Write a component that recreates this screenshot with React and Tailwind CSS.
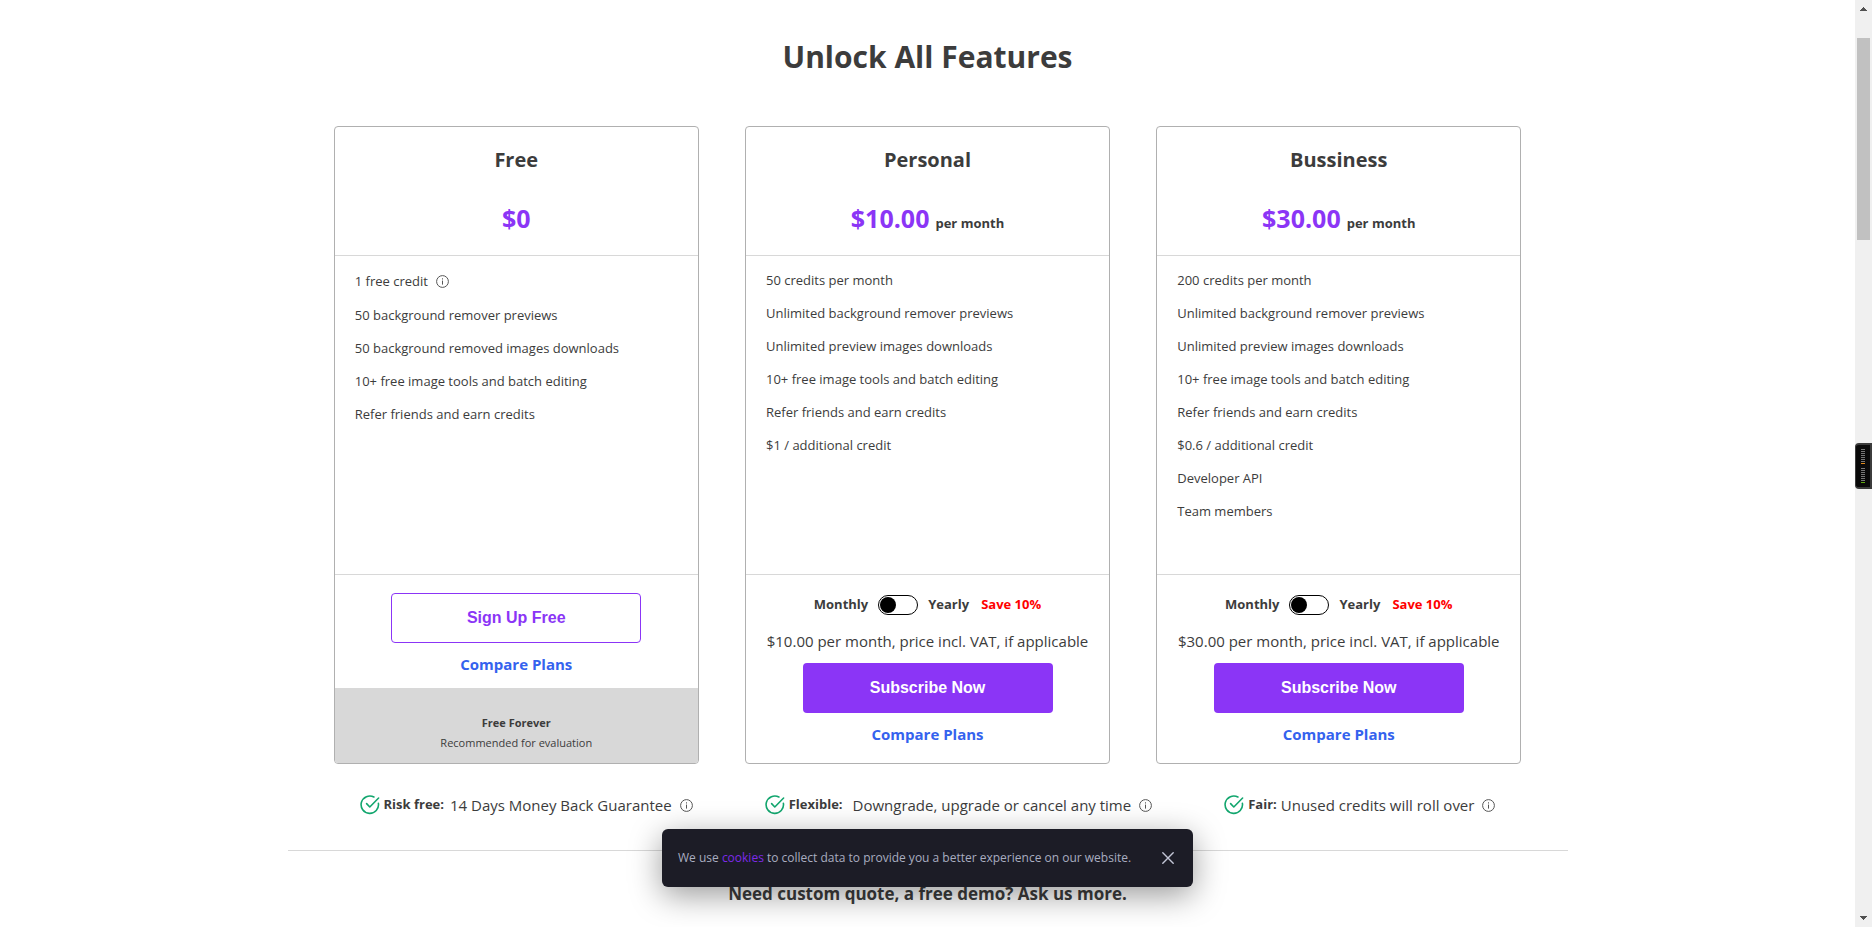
import { useState } from 'react'

const PLANS = [
  {
    name: 'Free',
    price: '$0',
    free: true,
    features: [
      '1 free credit',
      '50 background remover previews',
      '50 background removed images downloads',
      '10+ free image tools and batch editing',
      'Refer friends and earn credits',
    ],
  },
  {
    name: 'Personal',
    price: '$10.00',
    features: [
      '50 credits per month',
      'Unlimited background remover previews',
      'Unlimited preview images downloads',
      '10+ free image tools and batch editing',
      'Refer friends and earn credits',
      '$1 / additional credit',
    ],
  },
  {
    name: 'Bussiness',
    price: '$30.00',
    features: [
      '200 credits per month',
      'Unlimited background remover previews',
      'Unlimited preview images downloads',
      '10+ free image tools and batch editing',
      'Refer friends and earn credits',
      '$0.6 / additional credit',
      'Developer API',
      'Team members',
    ],
  },
]

const PERKS = [
  { title: 'Risk free:', text: '14 Days Money Back Guarantee', gap: 'mr-1.5' },
  { title: 'Flexible:', text: 'Downgrade, upgrade or cancel any time', gap: 'mr-2.5' },
  { title: 'Fair:', text: 'Unused credits will roll over', gap: 'mr-1' },
]

function InfoIcon() {
  return (
    <svg width="13" height="13" viewBox="0 0 13 13" fill="none" stroke="#555" className="shrink-0" aria-hidden="true">
      <circle cx="6.5" cy="6.5" r="5.9" />
      <path d="M6.5 5.6v4M6.5 3.3v1.2" />
    </svg>
  )
}

function CheckIcon() {
  return (
    <svg width="20" height="20" viewBox="0 0 20 20" fill="none" stroke="#12a66e" strokeWidth="1.6" strokeLinecap="round" strokeLinejoin="round" className="shrink-0" aria-hidden="true">
      <path d="M18.4 8.3A8.7 8.7 0 1 1 13.9 2" />
      <path d="M6.6 8.6l3.2 3.4L18.6 3" />
    </svg>
  )
}

function BillingSwitch({ id }) {
  const [yearly, setYearly] = useState(false)
  return (
    <div className="flex h-5 items-center text-[13px] font-bold">
      <span>Monthly</span>
      <input id={id} type="checkbox" role="switch" checked={yearly} onChange={e => setYearly(e.target.checked)}
        className="mx-2.5 flex h-5 w-10 shrink-0 appearance-none items-center rounded-full border border-black px-px before:block before:size-4 before:rounded-full before:bg-black checked:justify-end" />
      <label htmlFor={id}>Yearly</label>
      <span className="ml-3 text-[#f00]">Save 10%</span>
    </div>
  )
}

function PlanCard({ plan }) {
  return (
    <section className="flex w-[365px] flex-col overflow-hidden rounded border border-[#b0b0b0]">
      <header className="flex h-[129px] flex-col items-center border-b border-[#d8d8d8] pt-[17px]">
        <h2 className="text-xl leading-8 font-bold">{plan.name}</h2>
        <p className="mt-[26px] flex items-baseline gap-[6px] leading-8 font-bold">
          <span className="text-[25px] text-[#8b35f6]">{plan.price}</span>
          {!plan.free && <span className="text-[13px]">per month</span>}
        </p>
      </header>
      <ul className="h-[319px] border-b border-[#d8d8d8] px-5 pt-2 text-[13px]">
        {plan.features.map((f, i) => (
          <li key={f} className={plan.free && i === 0 ? 'flex h-[35px] items-center gap-2' : 'flex h-[33px] items-center'}>
            {f}
            {plan.free && i === 0 && <InfoIcon />}
          </li>
        ))}
      </ul>
      {plan.free ? (
        <div className="flex flex-1 flex-col items-center pt-[18px]">
          <button className="h-[50px] w-[250px] rounded border border-[#8b35f6] font-['Liberation_Sans',sans-serif] text-base font-bold text-[#8b35f6]">
            Sign Up Free
          </button>
          <a href="#compare" className="mt-[9px] text-[15px] leading-6 font-bold text-[#3462ee]">Compare Plans</a>
          <div className="mt-auto h-[75px] w-full bg-[#d8d8d8] pt-[25px] text-center text-[11px] leading-5">
            <p className="font-bold">Free Forever</p>
            <p>Recommended for evaluation</p>
          </div>
        </div>
      ) : (
        <div className="flex flex-1 flex-col items-center pt-5">
          <BillingSwitch id={`billing-${plan.name}`} />
          <p className="mt-3.5 text-[15px] leading-6 whitespace-nowrap">{plan.price} per month, price incl. VAT, if applicable</p>
          <button className="mt-2.5 h-[50px] w-[250px] rounded bg-[#8b35f6] font-['Liberation_Sans',sans-serif] text-base font-bold text-white">
            Subscribe Now
          </button>
          <a href="#compare" className="mt-[9px] text-[15px] leading-6 font-bold text-[#3462ee]">Compare Plans</a>
        </div>
      )}
    </section>
  )
}

function CookieBar() {
  const [open, setOpen] = useState(true)
  if (!open) return null
  return (
    <div className="absolute inset-x-0 bottom-10 flex justify-center">
      <div className="flex h-[58px] w-[531px] items-center justify-between rounded-md bg-[#1c1c26] pr-[19px] pl-4 text-xs text-[#a9adc0] shadow-[0_8px_32px_rgba(2,2,3,0.4)]">
        <p className="whitespace-nowrap">
          We use <a href="#cookies" className="text-[#7d2ae8]">cookies</a> to collect data to provide you a better experience on our website.
        </p>
        <button aria-label="Close" onClick={() => setOpen(false)}>
          <svg width="12" height="12" viewBox="0 0 12 12" stroke="#c3c6d6" strokeWidth="1.4" strokeLinecap="round" aria-hidden="true">
            <path d="M.8.8l10.4 10.4M11.2.8L.8 11.2" />
          </svg>
        </button>
      </div>
    </div>
  )
}

function Meter({ last }) {
  return (
    <div className="flex flex-col gap-px">
      {[0, 1, 2, 3, 4, 5, 6].map(i => <i key={i} className="h-px w-1 bg-[#777]" />)}
      <i className={`h-px w-1 ${last}`} />
    </div>
  )
}

function ScrollRail() {
  return (
    <aside className="relative flex w-[17px] shrink-0 flex-col items-center justify-between bg-[#f0f0f0]">
      <svg width="7" height="4" viewBox="0 0 7 4" fill="#505050" shapeRendering="crispEdges" className="mt-[7px]" aria-hidden="true">
        <path d="M3 0h1v1h1v1h1v1h1v1H0V3h1V2h1V1h1z" />
      </svg>
      <div className="absolute top-[38px] h-[202px] w-[13px] bg-[#c1c1c1]" />
      <div className="absolute top-[443px] right-0 flex h-[46px] w-[17px] flex-col items-center justify-center gap-1 rounded-l-sm border-2 border-l border-[#3c3c3c] bg-[#0a0a0a]">
        <Meter last="bg-[#e08a1a]" />
        <Meter last="bg-[#5fa80f]" />
      </div>
      <svg width="7" height="4" viewBox="0 0 7 4" fill="#505050" shapeRendering="crispEdges" className="mb-[7px]" aria-hidden="true">
        <path d="M0 0h7v1H6v1H5v1H4v1H3V3H2V2H1V1H0z" />
      </svg>
    </aside>
  )
}

export default function App() {
  return (
    <div className="flex h-screen overflow-hidden bg-white font-['Open_Sans','Noto_Sans',sans-serif] text-[#3c3c3c]">
      <main className="relative min-w-0 flex-1 overflow-hidden">
        <h1 className="pt-8 text-center text-[30px] leading-[50px] font-bold">Unlock All Features</h1>
        <div className="mx-auto mt-11 max-w-[1280px]">
          <div className="flex min-h-[638px] justify-evenly">
            {PLANS.map(p => <PlanCard key={p.name} plan={p} />)}
          </div>
          <div className="flex h-[87px] items-center justify-evenly border-b border-[#d8d8d8] pb-1">
            {PERKS.map(p => (
              <div key={p.title} className="flex items-center">
                <CheckIcon />
                <strong className={`ml-1 text-[13px] ${p.gap}`}>{p.title}</strong>
                <span className="mr-2 text-[15px]">{p.text}</span>
                <InfoIcon />
              </div>
            ))}
          </div>
          <h3 className="mt-[27px] text-center text-[17px] leading-8 font-bold">Need custom quote, a free demo? Ask us more.</h3>
        </div>
        <CookieBar />
      </main>
      <ScrollRail />
    </div>
  )
}
